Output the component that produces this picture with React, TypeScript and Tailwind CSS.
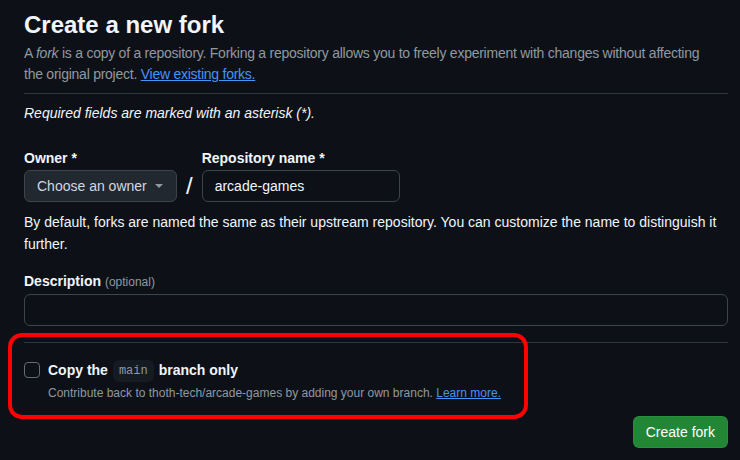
export default function App() {
  return (
    <div
      className="relative w-[740px] h-[460px] overflow-hidden bg-[#0d1117] text-[#f0f6fc]"
      style={{ fontFamily: '"Liberation Sans", Arial, sans-serif' }}
    >
      <div className="px-6 pt-[9px] w-[728px] pr-0">
        <h1 className="text-[24px] leading-[32px] font-semibold">Create a new fork</h1>
        <p className="mt-[2px] w-[686px] text-[14px] leading-[21px] tracking-[-0.25px] text-[#9198a1]">
          A <em>fork</em> is a copy of a repository. Forking a repository allows you to freely experiment with changes without affecting the original project.{" "}
          <a className="text-[#4493f8] underline">View existing forks.</a>
        </p>
        <div className="mt-[8px] h-px bg-[#30363d]" />
        <p className="mt-[9px] text-[14px] leading-[21px] italic">
          Required fields are marked with an asterisk (*).
        </p>

        <div className="mt-[24px] flex items-end">
          <div className="flex flex-col">
            <label className="text-[14px] leading-[21px] font-semibold">Owner *</label>
            <button className="mt-[1px] flex h-[32px] w-[153px] items-center justify-between rounded-md border border-[#3d444d] bg-[#212830] pl-3 pr-[13px] text-[14px] text-[#d1d7e0]">
              <span>Choose an owner</span>
              <svg width="8" height="4" viewBox="0 0 8 4" className="ml-2">
                <path d="M0 0h8L4 4z" fill="#9198a1" />
              </svg>
            </button>
          </div>
          <span className="mx-[9px] h-[32px] flex items-center text-[24px] leading-[32px] font-light text-[#f0f6fc]">/</span>
          <div className="flex flex-col">
            <label className="text-[14px] leading-[21px] font-semibold">Repository name *</label>
            <div className="mt-[1px] flex h-[32px] w-[198px] items-center rounded-md border border-[#3d444d] bg-[#0d1117] px-3 text-[14px]">
              arcade-games
            </div>
          </div>
        </div>

        <p className="mt-[9px] text-[14px] leading-[22px] text-[#f0f6fc]">
          By default, forks are named the same as their upstream repository. You can customize the name to distinguish it further.
        </p>

        <div className="mt-[16px] text-[14px] leading-[21px]">
          <span className="font-semibold">Description</span>{" "}
          <span className="text-[12px] text-[#9198a1]">(optional)</span>
        </div>
        <div className="mt-[1px] h-[32px] rounded-md border border-[#3d444d] bg-[#0d1117]" />

        <div className="mt-[16px] h-px bg-[#30363d]" />

        <div className="mt-[17px] flex items-start">
          <div className="mt-[2px] h-[16px] w-[16px] rounded-[4px] border border-[#656c76] bg-[#0d1117]" />
          <div className="ml-[8px]">
            <div className="flex h-[21px] items-center text-[14px] font-semibold">
              Copy the
              <code
                className="mx-[5px] inline-flex h-[22px] items-center rounded-md bg-[#151b23] px-[6px] text-[12px] leading-[22px] font-normal text-[#9198a1]"
                style={{ fontFamily: '"Liberation Mono", monospace' }}
              >
                main
              </code>
              branch only
            </div>
            <p className="mt-[3px] text-[12px] leading-[18px] text-[#9198a1]">
              Contribute back to thoth-tech/arcade-games by adding your own branch.{" "}
              <a className="text-[#4493f8] underline">Learn more.</a>
            </p>
          </div>
        </div>

        <div className="mt-[14px] flex justify-end">
          <button className="h-[32px] rounded-md border border-[#2ea043]/40 bg-[#238636] px-3 text-[14px] text-white">
            Create fork
          </button>
        </div>
      </div>

      <div className="pointer-events-none absolute left-[8px] top-[333px] h-[86px] w-[520px] rounded-[14px] border-4 border-[#ff0000]" />
    </div>
  );
}
